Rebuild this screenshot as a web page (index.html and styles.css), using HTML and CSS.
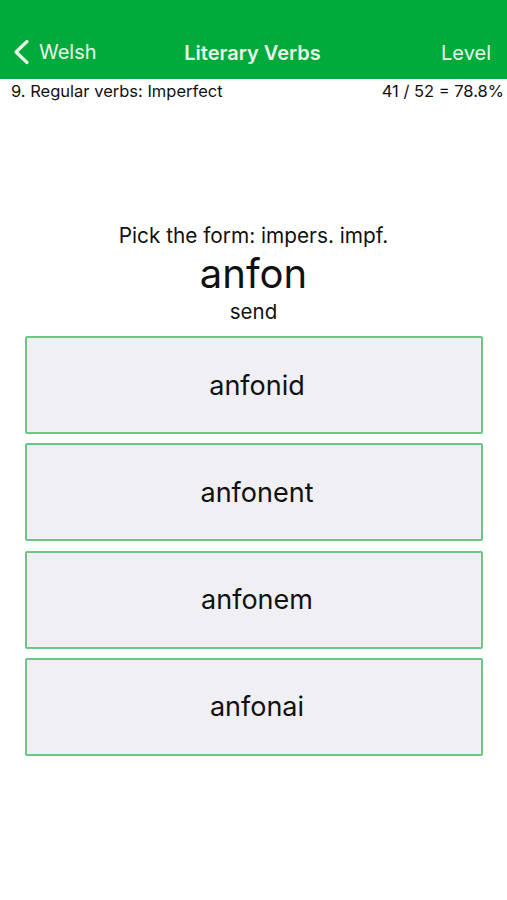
FILE: index.html
```html
<!DOCTYPE html>
<html lang="en">
<head>
    <meta charset="UTF-8">
    <meta name="viewport" content="width=device-width, initial-scale=1.0">
    <title>Literary Verbs</title>
    <link rel="stylesheet" href="styles.css">
</head>
<body>
    <header class="navbar">
        <div class="nav-back">
            <svg class="chevron" width="18" height="26" viewBox="0 0 18 26">
                <path d="M15 2.5 L4 13 L15 23.5" fill="none" stroke="#e8f7ea" stroke-width="3.2" stroke-linecap="round" stroke-linejoin="round"/>
            </svg>
            <span>Welsh</span>
        </div>
        <div class="nav-title">Literary Verbs</div>
        <div class="nav-right">Level</div>
    </header>
    <div class="status">
        <span>9. Regular verbs: Imperfect</span>
        <span>41 / 52 = 78.8%</span>
    </div>
    <main class="quiz">
        <p class="prompt">Pick the form: impers. impf.</p>
        <p class="word">anfon</p>
        <p class="gloss">send</p>
        <div class="answers">
            <button class="answer">anfonid</button>
            <button class="answer">anfonent</button>
            <button class="answer">anfonem</button>
            <button class="answer">anfonai</button>
        </div>
    </main>
</body>
</html>
```

FILE: styles.css
```css
body {
    font-family: Inter, "Noto Sans", sans-serif;
    margin: 0;
    background: white;
    color: #111;
}
.navbar {
    background: #00aa3b;
    height: 79px;
    display: flex;
    align-items: flex-end;
    justify-content: space-between;
    padding: 0 14px 14px 12px;
    box-sizing: border-box;
    color: #e8f7ea;
    font-size: 20px;
}
.nav-back {
    display: flex;
    align-items: center;
    gap: 9px;
    width: 120px;
}
.nav-title {
    font-weight: 600;
    text-align: center;
    padding-left: 2px;
}
.nav-right {
    width: 120px;
    text-align: right;
    padding-right: 2px;
}
.status {
    display: flex;
    justify-content: space-between;
    padding: 2px 3px 0 11px;
    font-size: 16.5px;
    height: 25px;
    box-sizing: border-box;
}
.quiz {
    padding-top: 118px;
    text-align: center;
}
.prompt {
    margin: 0;
    font-size: 20.8px;
    line-height: 28px;
}
.word {
    margin: 0;
    font-size: 40px;
    line-height: 48px;
}
.gloss {
    margin: 0;
    font-size: 20.5px;
    line-height: 28px;
}
.answers {
    display: flex;
    flex-direction: column;
    gap: 9.3px;
    padding: 10px 24px 0 25px;
}
.answer {
    height: 98px;
    padding: 0 0 0 6px;
    background: #efeff4;
    border: 2px solid #6cc785;
    border-radius: 2px;
    font-family: inherit;
    font-size: 27px;
    color: #111;
}
```
